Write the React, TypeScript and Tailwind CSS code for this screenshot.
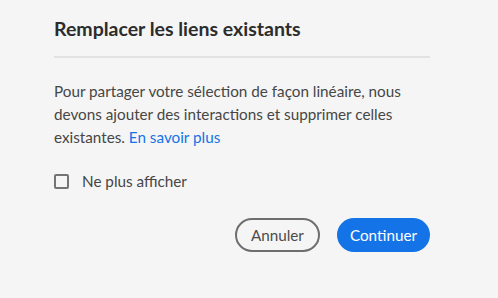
export default function App() {
  return (
    <div className="w-[498px] h-[298px] bg-[#f5f5f5] overflow-hidden" style={{ fontFamily: '"Lato", "Noto Sans", sans-serif' }}>
      <div className="ml-[54px] w-[376px] pt-[16px]">
        <h1 className="text-[19.5px] font-bold leading-[26px] text-[#2c2c2c]">Remplacer les liens existants</h1>
        <div className="mt-[14px] h-[2px] bg-[#e2e2e2]" />
        <p className="mt-[22px] text-[15.25px] leading-[23px] text-[#464646]">
          Pour partager votre sélection de façon linéaire, nous devons ajouter des interactions et supprimer celles existantes.{" "}
          <a className="text-[#1473e6]">En savoir plus</a>
        </p>
        <label className="mt-[21px] flex items-center gap-[13px]">
          <span className="w-[15px] h-[15px] border-2 border-[#747474] rounded-[2px]" />
          <span className="text-[15.25px] leading-[23px] text-[#464646]">Ne plus afficher</span>
        </label>
        <div className="mt-[25px] flex justify-end gap-[17px]">
          <button className="h-[34px] px-[14px] rounded-full border-2 border-[#6e6e6e] text-[15.25px] text-[#4b4b4b]">Annuler</button>
          <button className="h-[34px] px-[13px] rounded-full bg-[#1473e6] text-[15.25px] text-white">Continuer</button>
        </div>
      </div>
    </div>
  );
}
